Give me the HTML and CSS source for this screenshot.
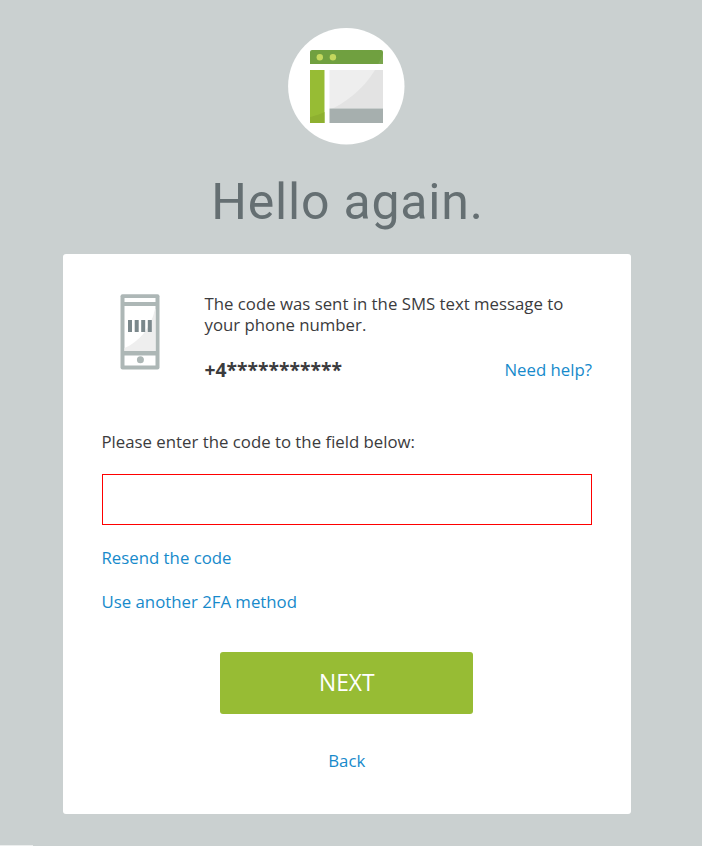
FILE: index.html
```
<!DOCTYPE html>
<html lang="en">
<head>
<meta charset="utf-8">
<title>Hello again.</title>
<link rel="stylesheet" href="styles.css">
</head>
<body>
<main class="page">
  <svg class="logo" width="118" height="118" viewBox="0 0 118 118" aria-hidden="true">
    <defs>
      <clipPath id="shade"><path d="M20 91C52 83 83 62 96 26H105V100H20Z"/></clipPath>
    </defs>
    <circle cx="59.3" cy="59.3" r="58.2" fill="#fff"/>
    <path d="M23 37V25a2 2 0 0 1 2-2H94a2 2 0 0 1 2 2V37Z" fill="#70a040"/>
    <path d="M23 43H37.5V96H23Z" fill="#97bc34"/>
    <path d="M42.5 43H96V81.500H42.500Z" fill="#eee"/>
    <g clip-path="url(#shade)">
      <path d="M23 37V23H94a2 2 0 0 1 2 2V37Z" fill="#7aa64e"/>
      <path d="M23 43H37.5V96H23Z" fill="#8eb030"/>
      <path d="M42.500 43H96V81.500H42.500Z" fill="#e3e3e3"/>
    </g>
    <path d="M42.5 81.500H96V96H42.500Z" fill="#a6afae"/>
    <circle cx="32.800" cy="30.300" r="3.200" fill="#c3d85e"/>
    <circle cx="45.900" cy="30.300" r="3.200" fill="#c3d85e"/>
  </svg>
  <h1 class="title">Hello again.</h1>
  <section class="card">
    <div class="notice">
      <svg class="phone" width="40" height="76" viewBox="0 0 40 76" aria-hidden="true">
        <rect x=".5" y=".2" width="39" height="75.300" rx="2" fill="#adb7b6"/>
        <path d="M4.500 4H35.500V8H4.500ZM4.500 12H35.500V57H4.500ZM4.500 61.500H35.500V71.500H4.500Z" fill="#fff"/>
        <path d="M4.500 54C19 48 31 34 35 15H35.500V57H4.500Z" fill="#eee"/>
        <path d="M8 26h4v12H8ZM14.700 26h4v12h-4ZM21.200 26h4v12h-4ZM27.800 26h4v12h-4Z" fill="#7b888c"/>
        <circle cx="20.400" cy="65.800" r="3.500" fill="#adb7b6"/>
      </svg>
      <div class="details">
        <p class="message">The code was sent in the SMS text message to your phone number.</p>
        <div class="row">
          <strong class="number">+4***********</strong>
          <a class="link" href="#">Need help?</a>
        </div>
      </div>
    </div>
    <form class="form">
      <label class="label" for="code">Please enter the code to the field below:</label>
      <input class="code" id="code" type="text">
      <a class="link" href="#">Resend the code</a>
      <a class="link other" href="#">Use another 2FA method</a>
      <button class="next" type="button">NEXT</button>
      <a class="link back" href="#">Back</a>
    </form>
  </section>
  <div class="corner"></div>
</main>
</body>
</html>
```
FILE: styles.css
```
* { box-sizing: border-box; }
body {
  margin: 0;
  background: #cad0d0;
  color: #3b3b3d;
  font: 16.8px/21px "Open Sans", sans-serif;
}
.page {
  display: flex;
  flex-direction: column;
  align-items: center;
  height: 846px;
  padding: 27px 9px 0 0;
  overflow: hidden;
}
.logo { flex: none; margin-right: 1.5px; }
.title {
  margin: 26px 0 0;
  height: 83px;
  padding-left: 2px;
  color: #656f72;
  font: 400 50px/62px Roboto, sans-serif;
  letter-spacing: .8px;
  white-space: nowrap;
}
.card {
  flex: none;
  width: 568px;
  height: 560px;
  padding: 39px 38.5px 0 39px;
  background: #fff;
  border-radius: 3px;
}
.notice { display: flex; height: 138px; }
.phone { flex: none; margin: 1px 45px 0 18px; }
.details { flex: 1; }
.message { width: 375px; margin: 0; }
.row { display: flex; justify-content: space-between; margin-top: 24px; }
.number { font-size: 19.3px; }
.link { color: #178acb; text-decoration: none; }
.form { display: flex; flex-direction: column; align-items: flex-start; }
.code {
  width: 100%;
  height: 51px;
  margin: 22px 0 22px;
  padding: 0 14px;
  border: 1px solid #f00;
  background: #fff;
  font: inherit;
  outline: 0;
}
.other { margin-top: 23px; }
.next {
  align-self: center;
  width: 253px;
  height: 62px;
  margin: 40px 0 36px;
  padding: 0;
  border: 0;
  border-radius: 3px;
  background: #97bc34;
  color: #fff;
  font: 22.8px/60px "Open Sans", sans-serif;
}
.back { align-self: center; }
.corner {
  flex: none;
  align-self: flex-start;
  width: 33px;
  height: 1px;
  margin-top: 31px;
  background: #eceeee;
}
```
